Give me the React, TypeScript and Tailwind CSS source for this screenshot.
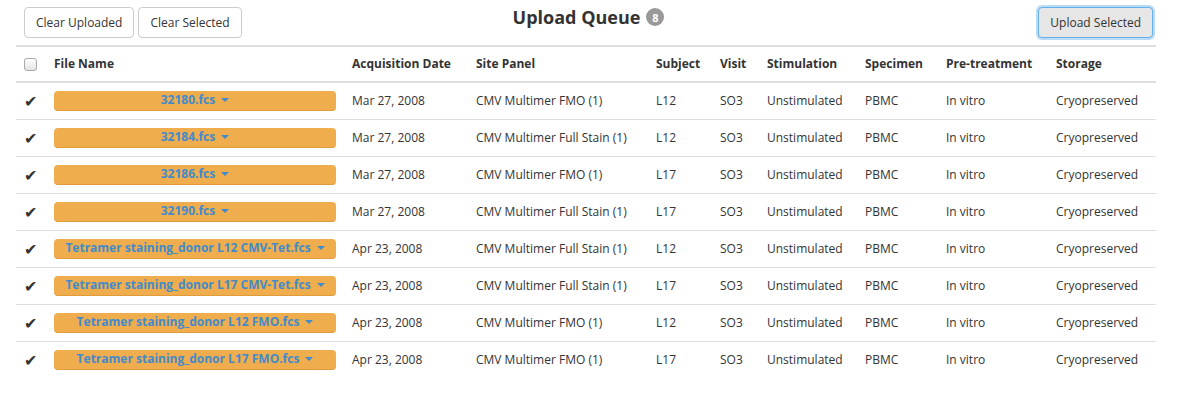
import React from "react";

type Row = {
  file: string;
  date: string;
  panel: string;
  subject: string;
};

const rows: Row[] = [
  { file: "32180.fcs", date: "Mar 27, 2008", panel: "CMV Multimer FMO (1)", subject: "L12" },
  { file: "32184.fcs", date: "Mar 27, 2008", panel: "CMV Multimer Full Stain (1)", subject: "L12" },
  { file: "32186.fcs", date: "Mar 27, 2008", panel: "CMV Multimer FMO (1)", subject: "L17" },
  { file: "32190.fcs", date: "Mar 27, 2008", panel: "CMV Multimer Full Stain (1)", subject: "L17" },
  { file: "Tetramer staining_donor L12 CMV-Tet.fcs", date: "Apr 23, 2008", panel: "CMV Multimer Full Stain (1)", subject: "L12" },
  { file: "Tetramer staining_donor L17 CMV-Tet.fcs", date: "Apr 23, 2008", panel: "CMV Multimer Full Stain (1)", subject: "L17" },
  { file: "Tetramer staining_donor L12 FMO.fcs", date: "Apr 23, 2008", panel: "CMV Multimer FMO (1)", subject: "L12" },
  { file: "Tetramer staining_donor L17 FMO.fcs", date: "Apr 23, 2008", panel: "CMV Multimer FMO (1)", subject: "L17" },
];

const headers = [
  "File Name",
  "Acquisition Date",
  "Site Panel",
  "Subject",
  "Visit",
  "Stimulation",
  "Specimen",
  "Pre-treatment",
  "Storage",
];

function Caret() {
  return (
    <span className="ml-[6px] inline-block h-0 w-0 border-x-[4px] border-t-[4px] border-x-transparent border-t-[#428bca] align-middle" />
  );
}

export default function App() {
  return (
    <div
      className="min-h-[411px] bg-white px-4 text-[12px] text-[#333]"
      style={{ fontFamily: '"Open Sans", "Liberation Sans", sans-serif' }}
    >
      <div className="grid grid-cols-[1fr_auto_1fr] items-center px-2 pt-[7px] pb-[7px]">
        <div className="flex gap-1">
          <button
            type="button"
            className="h-[31px] rounded border border-[#ccc] bg-white px-[11px] text-[12px] text-[#333]"
          >
            Clear Uploaded
          </button>
          <button
            type="button"
            className="h-[31px] rounded border border-[#ccc] bg-white px-[11px] text-[12px] text-[#333]"
          >
            Clear Selected
          </button>
        </div>
        <h1 className="-mt-[11px] flex items-center gap-[6px] text-[18px] font-bold leading-none text-[#333]">
          Upload Queue
          <span className="inline-flex h-[18px] w-[18px] items-center justify-center rounded-full bg-[#999] text-[11px] font-bold text-white">
            8
          </span>
        </h1>
        <div className="flex justify-end">
          <button
            type="button"
            className="h-[31px] rounded border border-[#66afe9] bg-[#e6e6e6] px-[11px] text-[12px] text-[#333] shadow-[0_0_0_2px_rgba(102,175,233,0.45)]"
          >
            Upload Selected
          </button>
        </div>
      </div>

      <table className="w-[1140px] table-fixed border-collapse border-t-2 border-[#ddd]">
        <colgroup>
          <col className="w-[30px]" />
          <col className="w-[298px]" />
          <col className="w-[124px]" />
          <col className="w-[180px]" />
          <col className="w-[64px]" />
          <col className="w-[47px]" />
          <col className="w-[98px]" />
          <col className="w-[81px]" />
          <col className="w-[110px]" />
          <col className="w-[108px]" />
        </colgroup>
        <thead>
          <tr className="h-[36px] border-b-2 border-[#ddd]">
            <th className="pl-2 text-left">
              <span className="block h-[13px] w-[13px] rounded-[3px] border border-[#aaa] bg-gradient-to-b from-white to-[#e4e4e4]" />
            </th>
            {headers.map((h) => (
              <th key={h} className="px-2 text-left font-bold whitespace-nowrap">
                {h}
              </th>
            ))}
          </tr>
        </thead>
        <tbody>
          {rows.map((r, i) => (
            <tr
              key={r.file}
              className={`h-[37px] ${i < rows.length - 1 ? "border-b border-[#ddd]" : ""}`}
            >
              <td className="pl-2 text-[16px] leading-none text-[#333]">✔</td>
              <td className="px-2">
                <div className="flex h-[20px] items-center justify-center rounded-[4px] border-b border-[#e09b3a] bg-[#f0ad4e] text-[12px] font-bold text-[#428bca]">
                  {r.file}
                  <Caret />
                </div>
              </td>
              <td className="px-2 whitespace-nowrap">{r.date}</td>
              <td className="px-2 whitespace-nowrap">{r.panel}</td>
              <td className="px-2">{r.subject}</td>
              <td className="px-2">SO3</td>
              <td className="px-2">Unstimulated</td>
              <td className="px-2">PBMC</td>
              <td className="px-2">In vitro</td>
              <td className="px-2">Cryopreserved</td>
            </tr>
          ))}
        </tbody>
      </table>
    </div>
  );
}
